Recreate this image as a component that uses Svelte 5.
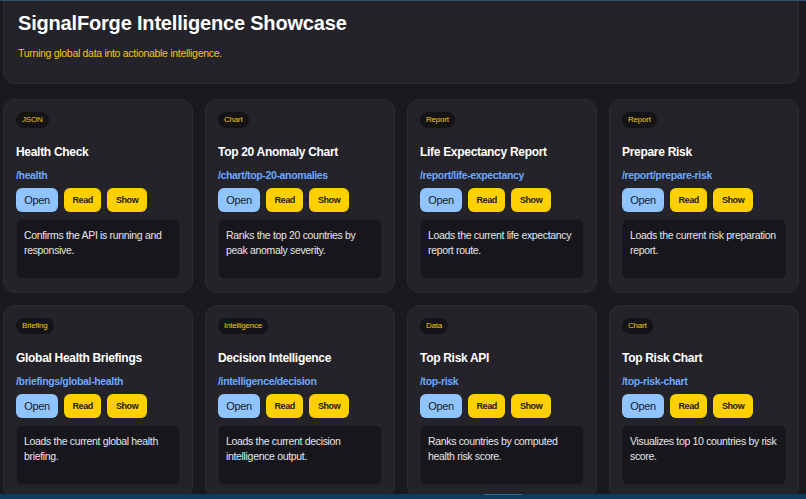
<script>
	const cards = [
		{ tag: 'JSON', title: 'Health Check', path: '/health', text: 'Confirms the API is running and responsive.' },
		{ tag: 'Chart', title: 'Top 20 Anomaly Chart', path: '/chart/top-20-anomalies', text: 'Ranks the top 20 countries by peak anomaly severity.' },
		{ tag: 'Report', title: 'Life Expectancy Report', path: '/report/life-expectancy', text: 'Loads the current life expectancy report route.' },
		{ tag: 'Report', title: 'Prepare Risk', path: '/report/prepare-risk', text: 'Loads the current risk preparation report.' },
		{ tag: 'Briefing', title: 'Global Health Briefings', path: '/briefings/global-health', text: 'Loads the current global health briefing.' },
		{ tag: 'Intelligence', title: 'Decision Intelligence', path: '/intelligence/decision', text: 'Loads the current decision intelligence output.' },
		{ tag: 'Data', title: 'Top Risk API', path: '/top-risk', text: 'Ranks countries by computed health risk score.' },
		{ tag: 'Chart', title: 'Top Risk Chart', path: '/top-risk-chart', text: 'Visualizes top 10 countries by risk score.' }
	];
</script>

<div class="page">
	<header class="hero">
		<h1>SignalForge Intelligence Showcase</h1>
		<p>Turning global data into actionable intelligence.</p>
	</header>
	<main class="grid">
		{#each cards as card}
			<section class="card">
				<span class="tag">{card.tag}</span>
				<h2>{card.title}</h2>
				<a class="path" href={card.path}>{card.path}</a>
				<div class="actions">
					<button class="open">Open</button>
					<button class="alt">Read</button>
					<button class="alt">Show</button>
				</div>
				<div class="desc">{card.text}</div>
			</section>
		{/each}
	</main>
	<div class="statusbar"><span class="thumb"></span></div>
</div>

<style>
	:global(body) {
		margin: 0;
		background: #1a1a1e;
	}
	.page {
		position: relative;
		height: 499px;
		overflow: hidden;
		box-sizing: border-box;
		padding: 0 7px 0 3px;
		border-top: 1px solid #2f5378;
		background: #1a1a1e;
		color: #fff;
		font-family: 'Liberation Sans', Arial, sans-serif;
	}
	.hero {
		box-sizing: border-box;
		height: 83px;
		padding: 10px 14px 0;
		background: #232329;
		border: 1px solid #2b2b32;
		border-top: none;
		border-radius: 0 0 12px 12px;
	}
	h1 {
		margin: 0;
		font-size: 20px;
		line-height: 24px;
		font-weight: 700;
		letter-spacing: -0.18px;
	}
	.hero p {
		margin: 11px 0 0;
		font-size: 10.5px;
		line-height: 14px;
		letter-spacing: -0.3px;
		color: #f2c800;
	}
	.grid {
		display: grid;
		grid-template-columns: repeat(4, 190px);
		gap: 12px;
		margin-top: 15px;
	}
	.card {
		box-sizing: border-box;
		height: 194px;
		padding: 12px;
		background: #232329;
		border: 1px solid #2b2b32;
		border-radius: 12px;
		display: flex;
		flex-direction: column;
		align-items: flex-start;
	}
	.tag {
		height: 16px;
		padding: 0 6px;
		border-radius: 8px;
		background: #141416;
		color: #f2c800;
		font-size: 8px;
		line-height: 16px;
		letter-spacing: -0.2px;
	}
	h2 {
		margin: 16px 0 0;
		font-size: 12px;
		line-height: 16px;
		font-weight: 700;
		letter-spacing: -0.3px;
	}
	.path {
		margin-top: 8px;
		font-size: 10.5px;
		line-height: 14px;
		font-weight: 700;
		letter-spacing: -0.35px;
		color: #6ea8fe;
		text-decoration: none;
	}
	.actions {
		display: flex;
		gap: 6px;
		margin-top: 6px;
	}
	button {
		height: 24px;
		border: none;
		border-radius: 6px;
		color: #1a1a1e;
		font-family: inherit;
		padding: 0 8.5px;
	}
	.open {
		width: 42px;
		padding: 0;
		background: #8fc4ff;
		font-size: 11px;
		letter-spacing: -0.4px;
	}
	.alt {
		background: #ffd000;
		font-size: 9px;
		font-weight: 700;
		letter-spacing: -0.4px;
	}
	.desc {
		box-sizing: border-box;
		width: 164px;
		height: 60px;
		margin-top: 7px;
		padding: 8px 5px 7px 7px;
		background: #17171b;
		border: 1px solid #1f1f24;
		border-radius: 6px;
		color: #e6e6ea;
		font-size: 10.5px;
		line-height: 15px;
		letter-spacing: -0.33px;
	}
	.statusbar {
		position: absolute;
		left: 0;
		right: 0;
		bottom: 0;
		height: 5px;
		background: #0e3a5c;
	}
	.thumb {
		position: absolute;
		left: 484px;
		top: 0;
		width: 38px;
		height: 1px;
		background: #2a6f96;
	}
</style>
